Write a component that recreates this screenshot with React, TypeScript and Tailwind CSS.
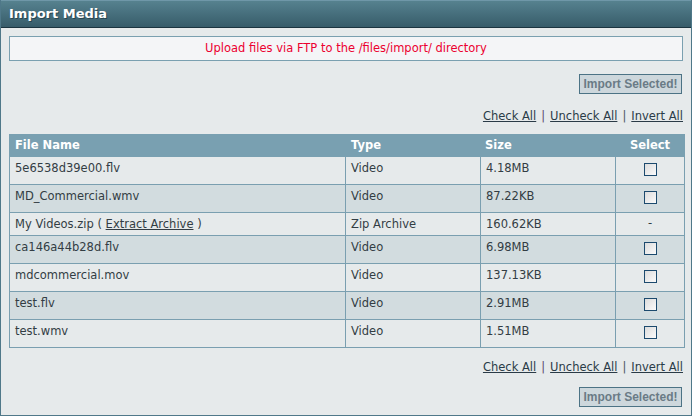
import React from "react";

const rows = [
  { name: "5e6538d39e00.flv", type: "Video", size: "4.18MB", check: true },
  { name: "MD_Commercial.wmv", type: "Video", size: "87.22KB", check: true },
  { name: "My Videos.zip", type: "Zip Archive", size: "160.62KB", check: false, zip: true },
  { name: "ca146a44b28d.flv", type: "Video", size: "6.98MB", check: true },
  { name: "mdcommercial.mov", type: "Video", size: "137.13KB", check: true },
  { name: "test.flv", type: "Video", size: "2.91MB", check: true },
  { name: "test.wmv", type: "Video", size: "1.51MB", check: true },
];

function Box() {
  return (
    <span className="inline-block w-[13px] h-[13px] border border-[#1c4a6e] bg-gradient-to-br from-[#dcdcdc] to-[#fbfbfb] align-top mt-[3px] mb-[3px]" />
  );
}

function Links() {
  return (
    <div className="flex justify-end text-[11.5px] text-[#2a3b47] leading-[14px] pr-[8px]">
      <span className="underline">Check All</span>
      <span className="px-[5px] text-[#5c4a6e]">|</span>
      <span className="underline">Uncheck All</span>
      <span className="px-[5px] text-[#4a5560]">|</span>
      <span className="underline">Invert All</span>
    </div>
  );
}

function Btn() {
  return (
    <div className="flex justify-end pr-[9px]">
      <span className="h-[20px] w-[103px] flex items-center justify-center border border-[#4c7385] bg-[#cdd7dc] text-[#6a7b86] text-[12px] font-bold font-['Liberation_Sans',sans-serif]">
        Import Selected!
      </span>
    </div>
  );
}

export default function App() {
  return (
    <div className="w-[692px] h-[416px] font-['DejaVu_Sans',sans-serif] border-x border-b border-[#4f7889] bg-[#e6eaeb] flex flex-col">
      <div className="h-[28px] border-t border-[#6f97a8] border-b border-b-[#1b3440] bg-gradient-to-b from-[#56828f] to-[#375c6a] flex items-center pl-[8px]">
        <span className="text-white font-bold text-[13px] [text-shadow:1px_1px_0_#2a4650]">
          Import Media
        </span>
      </div>
      <div className="pt-[8px] pl-[8px]">
        <div className="w-[674px] h-[25px] border border-[#7aa0b0] bg-[#f4f5f7] flex items-center justify-center text-[11.5px] text-[#ec0030]">
          Upload files via FTP to the /files/import/ directory
        </div>
      </div>
      <div className="mt-[13px]">
        <Btn />
      </div>
      <div className="mt-[15px]">
        <Links />
      </div>
      <div className="pl-[8px] mt-[11px]">
        <table className="w-[675px] border-collapse text-[11.5px] text-[#333d44] table-fixed">
          <colgroup>
            <col className="w-[336px]" />
            <col className="w-[135px]" />
            <col className="w-[135px]" />
            <col className="w-[69px]" />
          </colgroup>
          <thead>
            <tr className="bg-[#79a0b1] text-white font-bold text-left h-[22px]">
              <th className="pl-[5px] border border-[#79a0b1]">File Name</th>
              <th className="pl-[5px] border border-[#79a0b1]">Type</th>
              <th className="pl-[4px] border border-[#79a0b1]">Size</th>
              <th className="text-center border border-[#79a0b1]">Select</th>
            </tr>
          </thead>
          <tbody>
            {rows.map((r, i) => (
              <tr key={i} className={i % 2 === 0 ? "bg-[#e6eaeb]" : "bg-[#d2dcdf]"}>
                <td className="border border-[#7a9fb0] pl-[5px] pt-[3px] pb-[3px] align-top leading-[16px]">
                  {r.name}
                  {r.zip && (
                    <>
                      {" ( "}
                      <span className="underline">Extract Archive</span>
                      {" )"}
                    </>
                  )}
                </td>
                <td className="border border-[#7a9fb0] pl-[5px] pt-[3px] align-top leading-[16px]">{r.type}</td>
                <td className="border border-[#7a9fb0] pl-[5px] pt-[3px] align-top leading-[16px]">{r.size}</td>
                <td className="border border-[#7a9fb0] text-center pt-[3px] pb-[5px] align-top leading-[14px]">
                  {r.check ? <Box /> : <span>-</span>}
                </td>
              </tr>
            ))}
          </tbody>
        </table>
      </div>
      <div className="mt-[12px]">
        <Links />
      </div>
      <div className="mt-[13px]">
        <Btn />
      </div>
    </div>
  );
}
